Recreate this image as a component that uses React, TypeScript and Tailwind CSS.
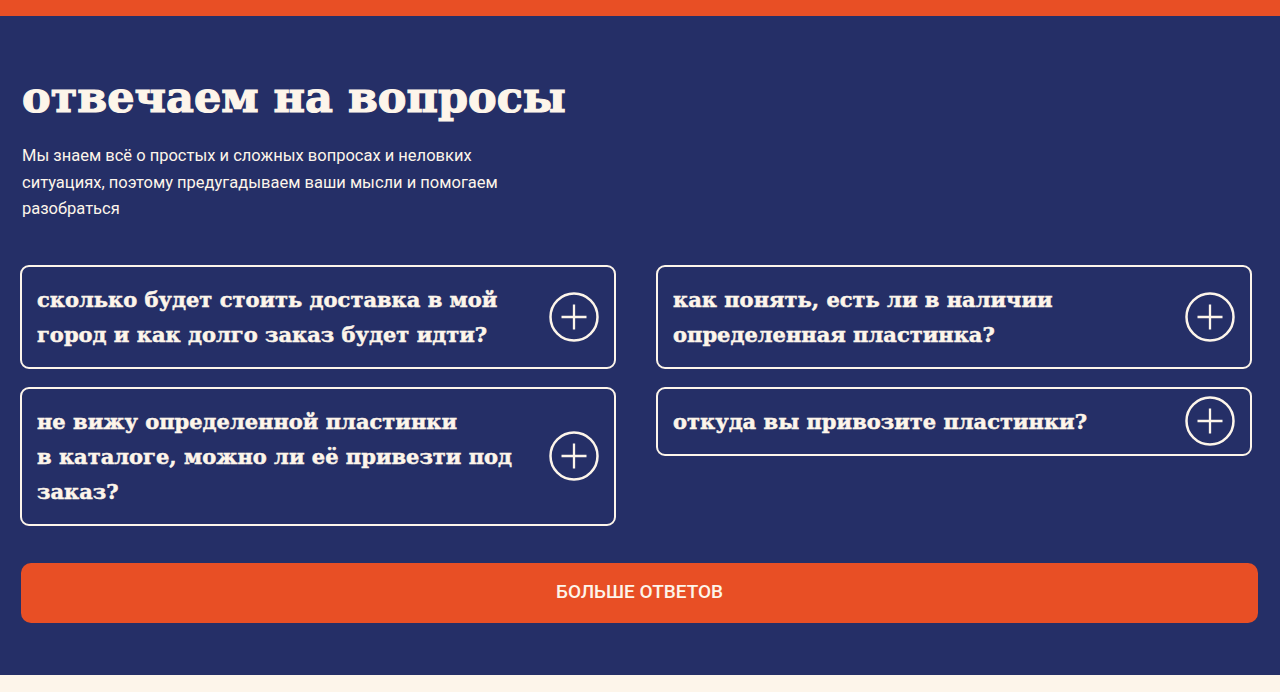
const questions: { id: number; text: string }[][] = [
  [
    { id: 1, text: 'сколько будет стоить доставка в мой город и как долго заказ будет идти?' },
    { id: 2, text: 'не вижу определенной пластинки в\u00a0каталоге, можно ли её привезти под заказ?' },
  ],
  [
    { id: 3, text: 'как понять, есть ли в наличии определенная пластинка?' },
    { id: 4, text: 'откуда вы привозите пластинки?' },
  ],
];

// round "+" toggle drawn by hand so the arm length and stroke stay thin
function PlusCircle() {
  return (
    <svg width="50" height="50" viewBox="0 0 50 50" fill="none" stroke="#fdf5ea" className="shrink-0">
      <circle cx="25" cy="25" r="23.5" strokeWidth="2.5" />
      <path d="M25 12.5v25M12.5 25h25" strokeWidth="2.3" />
    </svg>
  );
}

function QuestionCard({ text }: { text: string }) {
  return (
    <button className="flex w-full items-center justify-between gap-6 rounded-[9px] border-2 border-[#fdf5ea] pl-[15px] pr-[15px] text-left">
      <span className="max-w-[480px] py-[15px] font-['DejaVu_Serif',serif] text-[21px] font-bold leading-[35px] text-[#fdf5ea] [-webkit-text-stroke:0.5px_#fdf5ea]">
        {text}
      </span>
      <PlusCircle />
    </button>
  );
}

export default function App() {
  return (
    <div className="flex min-h-[692px] flex-col bg-[#fdf5ea]">
      <div className="h-4 bg-[#e84f25]" />
      <section className="bg-[#252f67] pl-5 pr-[22px] pt-[55px] pb-[52px]">
        <h1 className="pl-[2px] font-['DejaVu_Serif',serif] text-[43px] font-bold leading-[52px] text-[#fdf5ea] [-webkit-text-stroke:1.2px_#fdf5ea]">
          отвечаем на вопросы
        </h1>
        <p className="mt-[20px] max-w-[500px] pl-[2px] font-['Roboto',sans-serif] text-[16.5px] leading-[26.5px] text-[#fdf5ea]">
          Мы знаем всё о простых и сложных вопросах и неловких ситуациях, поэтому предугадываем ваши мысли и помогаем разобраться
        </p>
        <div className="mt-[42px] grid w-[1232px] grid-cols-2 gap-x-10">
          {questions.map((col, i) => (
            <div key={i} className="flex flex-col gap-[18px]">
              {col.map(q => (
                <QuestionCard key={q.id} text={q.text} />
              ))}
            </div>
          ))}
        </div>
        <button className="mt-[37px] ml-[1px] h-[60px] w-[1237px] rounded-[10px] bg-[#e84f25] font-['Roboto',sans-serif] text-[19px] font-medium text-[#fdf5ea]">
          БОЛЬШЕ ОТВЕТОВ
        </button>
      </section>
    </div>
  );
}
